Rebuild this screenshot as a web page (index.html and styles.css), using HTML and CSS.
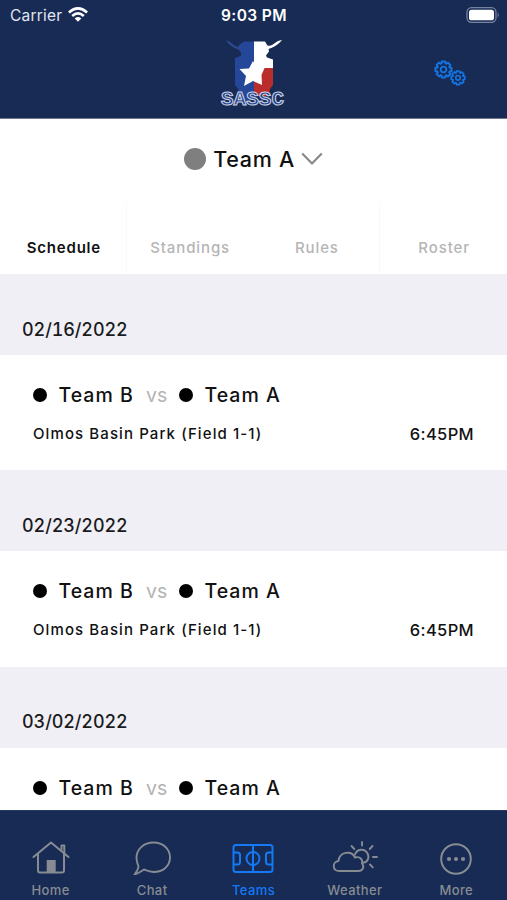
FILE: index.html
```html
<!DOCTYPE html>
<html lang="en">
<head>
<meta charset="utf-8">
<title>Team schedule</title>
<link rel="stylesheet" href="styles.css">
</head>
<body>
<div class="app">
  <header class="header">
    <div class="status">
      <div class="carrier"><span class="carrier-name">Carrier</span>
        <svg width="20" height="16" viewBox="0 0 20 16"><g fill="none" stroke="#fff" stroke-width="2.6"><path d="M.9 5.4Q10-2.5 19.1 5.4"/><path d="M4.2 8.9Q10 3.9 15.8 8.9"/></g><path d="M6.7 11.4Q10 8.8 13.3 11.4L10 14.8Z" fill="#fff"/></svg>
      </div>
      <div class="clock">9:03 PM</div>
      <svg class="battery" width="34" height="16" viewBox="0 0 34 16"><rect x="1" y=".7" width="29" height="14.6" rx="4.5" fill="none" stroke="#7682a0" stroke-width="1.3"/><rect x="3" y="2.7" width="25" height="10.6" rx="2.6" fill="#fff"/><path d="M31.7 5.5Q34 8 31.7 10.5Z" fill="#7682a0"/></svg>
    </div>
    <div class="brand">
      <svg class="logo" width="70" height="72" viewBox="0 0 70 72">
        <path d="M35 3.500H25l-5 3.500v5l2 3v3l-6 2v27l3 4 2 11h14Z" fill="#24479a"/>
        <path d="M21 8.500C15 10.500 14 3.500 7 2.500 11 8 15 10 21 12Z" fill="#2c4b8e"/>
        <path d="M35 3.500h11l3 5 1 5-3 4 1 2 6 2V32H44l-9 14Z" fill="#fff"/>
        <path d="M48 7.500C54 9.500 56 2.500 63 2 59 7 55 9 48.500 11.500Z" fill="#fff"/>
        <path d="M35 42l7-3V32l2-2h10v17l-3 4-1 7H35Z" fill="#b92d2b"/>
        <path d="M34 23l4 7 8-1-3.500 8L43 47l-9-4-9 5 2-10-6.500-7 9.500-.5Z" fill="#fff"/>
        <text x="33.500" y="67" text-anchor="middle" textLength="63" lengthAdjust="spacingAndGlyphs" class="logo-text">SASSC</text>
      </svg>
      <svg class="gears" width="36" height="32" viewBox="0 0 36 32">
        <defs><path id="gear" d="M8.5-1.8V1.8L6.4 2.1 6.01 3.05 7.28 4.74 4.74 7.28 3.05 6.01 2.1 6.4 1.8 8.5H-1.8L-2.1 6.4-3.05 6.01-4.74 7.28-7.28 4.74-6.01 3.05-6.4 2.1-8.5 1.8V-1.8L-6.4-2.1-6.01-3.05-7.28-4.74-4.74-7.28-3.05-6.01-2.1-6.4-1.8-8.5H1.8L2.1-6.4 3.05-6.01 4.74-7.28 7.28-4.74 6.01-3.05 6.4-2.1Z"/></defs>
        <g fill="none" stroke="#1475e5" stroke-linejoin="round">
          <use href="#gear" transform="translate(10.5 10.5) scale(.95)" stroke-width="2"/><circle cx="10.5" cy="10.5" r="2.8" stroke-width="1.8"/>
          <use href="#gear" transform="translate(25 18.8) scale(.8)" stroke-width="2.1"/><circle cx="25" cy="18.8" r="2.3" stroke-width="1.6"/>
        </g>
      </svg>
    </div>
  </header>

  <div class="picker"><i class="avatar"></i><span class="picker-name">Team A</span>
    <svg width="22" height="14" viewBox="0 0 22 14"><path d="M1.2 1.5 11 11.5 20.8 1.5" fill="none" stroke="#888" stroke-width="2.2"/></svg>
  </div>

  <nav class="tabs">
    <div class="tab active"><span>Schedule</span></div>
    <div class="tab"><span>Standings</span></div>
    <div class="tab"><span>Rules</span></div>
    <div class="tab"><span>Roster</span></div>
  </nav>

  <main class="list">
    <h2 class="date">02/16/2022</h2>
    <section class="game">
      <div class="match"><i class="dot"></i><span class="team">Team B</span><span class="vs">vs</span><i class="dot"></i><span class="team">Team A</span></div>
      <div class="detail"><span class="place">Olmos Basin Park (Field 1-1)</span><span class="time">6:45PM</span></div>
    </section>
    <h2 class="date">02/23/2022</h2>
    <section class="game">
      <div class="match"><i class="dot"></i><span class="team">Team B</span><span class="vs">vs</span><i class="dot"></i><span class="team">Team A</span></div>
      <div class="detail"><span class="place">Olmos Basin Park (Field 1-1)</span><span class="time">6:45PM</span></div>
    </section>
    <h2 class="date">03/02/2022</h2>
    <section class="game">
      <div class="match"><i class="dot"></i><span class="team">Team B</span><span class="vs">vs</span><i class="dot"></i><span class="team">Team A</span></div>
    </section>
  </main>

  <footer class="tabbar">
    <div class="item">
      <svg width="50" height="40" viewBox="0 0 50 40"><g fill="none" stroke="currentColor" stroke-width="2" stroke-linejoin="round" stroke-linecap="round"><path d="M7.5 22 25 7.5 42.5 22"/><path d="M12 19v16.5q0 2 2 2h22q2 0 2-2V19"/><path d="M35.5 15v-4.5h2.8V18"/></g><path d="M20.7 25h9v12.5h-9Z" fill="currentColor"/></svg>
      <span>Home</span>
    </div>
    <div class="item">
      <svg width="50" height="40" viewBox="0 0 50 40"><path d="M11.500 31.500C10.500 28.500 9.500 27 9.500 23 9.500 14 17 7.500 26.500 7.500S43 14 43 22.500 36 37 26.500 37C22.500 37 19.500 35.500 17 34.500 14 36.500 11 38.500 7.500 39.500 9.500 36.500 11.500 34 11.500 31.500Z" fill="none" stroke="currentColor" stroke-width="1.9" stroke-linejoin="round"/></svg>
      <span>Chat</span>
    </div>
    <div class="item selected">
      <svg width="50" height="40" viewBox="0 0 50 40"><g fill="none" stroke="currentColor" stroke-width="2"><rect x="5.500" y="10" width="39" height="27" rx="2.500"/><path d="M25 10v27M5.500 17.500h4q2.500 0 2.500 2.500v7q0 2.500-2.500 2.500h-4M44.500 17.500h-4q-2.500 0-2.500 2.500v7q0 2.500 2.500 2.500h4"/><circle cx="25" cy="23.500" r="6.500"/></g></svg>
      <span>Teams</span>
    </div>
    <div class="item">
      <svg width="50" height="40" viewBox="0 0 50 40"><g fill="none" stroke="currentColor" stroke-width="1.900" stroke-linecap="round" stroke-linejoin="round"><path d="M9.500 36C2 36 2 26.500 8.500 26 9.500 16.500 21.500 15 25 22.500 30.500 21 33 25 32 28.500 35 32 32.500 36 28.500 36Z"/><path d="M25 19.500C27 13.500 34 13.500 37 17.500 40 22 38 27 33 27.800M32 7v3.500M21.500 11l2.800 3M42.500 11l-2.800 3M43 22h4M40 29.500l2.800 2.800"/></g></svg>
      <span>Weather</span>
    </div>
    <div class="item">
      <svg width="50" height="40" viewBox="0 0 50 40"><circle cx="25" cy="24" r="14.800" fill="none" stroke="currentColor" stroke-width="2"/><g fill="currentColor"><circle cx="18" cy="24" r="2.100"/><circle cx="25" cy="24" r="2.100"/><circle cx="32" cy="24" r="2.100"/></g></svg>
      <span>More</span>
    </div>
  </footer>
</div>
</body>
</html>
```
FILE: styles.css
```css
* { box-sizing: border-box; }
body { margin: 0; font-family: Inter, "Liberation Sans", sans-serif; color: #111; }
svg { display: block; flex: none; }
.app { height: 900px; display: flex; flex-direction: column; overflow: hidden; background: #fff; }

.header { flex: none; height: 119px; background: #172b55; border-bottom: 1px solid #72798c; }
.status { height: 30px; display: grid; grid-template-columns: 1fr auto 1fr; align-items: center; padding: 0 7px 0 10px; color: #fff; }
.carrier { display: flex; align-items: center; gap: 6px; font-size: 15.5px; color: #e2e6ef; }
.carrier-name { letter-spacing: .2px; }
.clock { font-size: 15.5px; font-weight: 600; letter-spacing: .4px; position: relative; left: -1px; }
.battery { justify-self: end; }
.brand { display: grid; grid-template-columns: 1fr auto 1fr; padding-top: 8px; }
.logo { grid-column: 2; }
.logo-text { font: 700 20px "Liberation Mono", monospace; fill: #25428a; stroke: #ccd5e6; stroke-width: 1px; }
.gears { justify-self: end; align-self: start; margin: 21px 38px 0 0; }

.picker { flex: none; height: 83px; padding-bottom: 4px; display: flex; align-items: center; justify-content: center; }
.avatar { width: 22px; height: 22px; border-radius: 50%; background: #7f7f7f; margin-right: 7px; }
.picker-name { font-size: 21.5px; font-weight: 500; letter-spacing: .7px; margin-right: 6px; }

.tabs { flex: none; height: 72px; display: grid; grid-template-columns: repeat(4, 1fr); }
.tab { display: flex; justify-content: center; padding: 36px 0 0 1px; font-size: 15px; line-height: 20px; font-weight: 500; color: #b5b5b5; letter-spacing: .9px; }
.tab:nth-child(odd) { border-right: 1px solid #f9f9fa; }
.tab:nth-child(2) { padding-left: 0; }
.tab.active { padding-left: 2px; color: #111; font-weight: 600; letter-spacing: .8px; }

.list { flex: 1; min-height: 0; overflow: hidden; }
.date { margin: 0; height: 81px; padding: 43.5px 0 0 22px; background: #f0eff5; font-size: 18px; line-height: 24px; font-weight: 500; font-variant-numeric: tabular-nums; letter-spacing: -.1px; color: #1b1b1d; }
.game { height: 115.3px; padding: 27px 33px 0; }
.match { display: flex; align-items: center; height: 26px; font-size: 19.5px; color: #111; }
.dot { width: 14px; height: 14px; border-radius: 50%; background: #000; margin-right: 11.5px; }
.team { width: 75.5px; font-weight: 500; letter-spacing: 1px; white-space: nowrap; }
.vs { width: 33px; margin-left: 12px; color: #b3b3b3; }
.detail { display: flex; justify-content: space-between; align-items: center; margin-top: 13px; height: 24px; }
.place { font-size: 15px; font-weight: 500; letter-spacing: 1.1px; white-space: nowrap; }
.time { font-size: 16.5px; font-weight: 500; letter-spacing: .35px; padding-top: 1px; }

.tabbar { flex: none; height: 90px; display: grid; grid-template-columns: repeat(5, 1fr); background: #172b55; border-top: 1px solid #263962; }
.item { display: flex; flex-direction: column; align-items: center; padding-top: 24px; color: #878b92; font-size: 13px; font-weight: 500; line-height: 16px; letter-spacing: .4px; }
.item span { margin-top: 7px; }
.selected { color: #1479f5; }
```
